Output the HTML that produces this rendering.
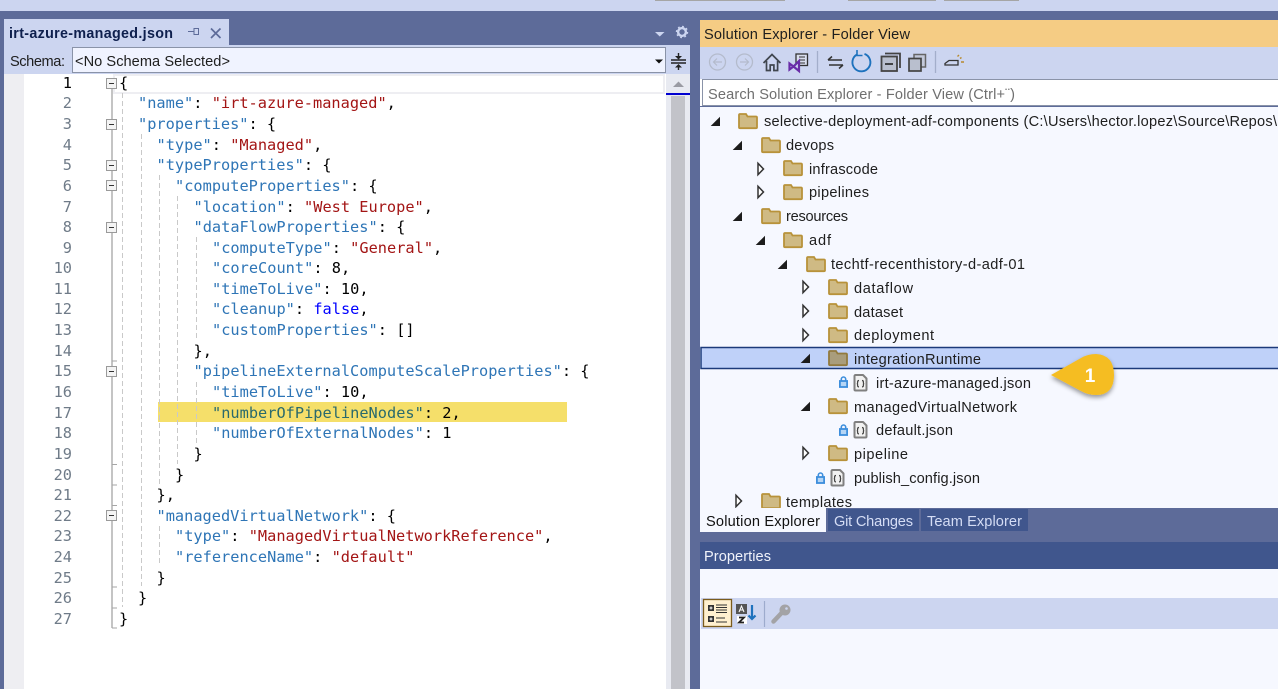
<!DOCTYPE html>
<html><head><meta charset="utf-8"><title>irt-azure-managed.json</title>
<style>
html,body{margin:0;padding:0;background:#5D6B99;overflow:hidden}
svg{display:block}
.u{font-family:"Liberation Sans",sans-serif;font-size:14.6px;fill:#1e1e1e}
.c{font-family:"DejaVu Sans Mono","Liberation Mono",monospace;font-size:15.3px;white-space:pre;fill:#000}
.k{fill:#2E75B6}.s{fill:#A31515}.b{fill:#0000FF}.h{fill:#2a6a6c}
.n{font-family:"DejaVu Sans Mono","Liberation Mono",monospace;font-size:15.3px;fill:#6f7b88;text-anchor:end}
</style></head><body>
<svg xmlns="http://www.w3.org/2000/svg" width="1278" height="689" viewBox="0 0 1278 689">
<defs>
<symbol id="fo" viewBox="0 0 20 16" width="20" height="16" overflow="visible"><path d="M1 2a1 1 0 0 1 1-1h6l1.500 2.500H18a1 1 0 0 1 1 1V14.200a1 1 0 0 1-1 1H2a1 1 0 0 1-1-1Z" fill="#CFBA84" stroke="#B8923A" stroke-width="1.800"/></symbol>
<symbol id="fs" viewBox="0 0 20 16" width="20" height="16" overflow="visible"><path d="M1 2a1 1 0 0 1 1-1h6l1.500 2.500H18a1 1 0 0 1 1 1V14.200a1 1 0 0 1-1 1H2a1 1 0 0 1-1-1Z" fill="#A99D7C" stroke="#927A3E" stroke-width="1.800"/></symbol>
<symbol id="js" viewBox="0 0 15 18" width="15" height="18" overflow="visible"><path d="M1.500 2a1 1 0 0 1 1-1h7.500l3.500 3.500V15.500a1 1 0 0 1-1 1h-10a1 1 0 0 1-1-1Z" fill="#F1F1F1" stroke="#808080" stroke-width="2" stroke-linejoin="round"/><path d="M6 6.500q-1.400 0-1.400 1.400v1q0 .8-.8.8.8 0 .8.8v1q0 1.400 1.400 1.400M9 6.500q1.400 0 1.400 1.400v1q0 .8.8.8-.8 0-.8.8v1q0 1.400-1.400 1.400" fill="none" stroke="#444" stroke-width="1.200"/></symbol>
<symbol id="lk" viewBox="0 0 9 12" width="9" height="12" overflow="visible"><rect x=".9" y="5" width="7.200" height="6" fill="#B5D5F5" stroke="#3D8EDC" stroke-width="1.800"/><path d="M2.300 5V3.200a2.200 2.200 0 0 1 4.400 0V5" fill="none" stroke="#3D8EDC" stroke-width="1.600"/></symbol>
<symbol id="ex" viewBox="0 0 9 9" width="9" height="9" overflow="visible"><path d="M9 -.3V9H-.3Z" fill="#1c1c1c"/></symbol>
<symbol id="co" viewBox="0 0 7 12" width="7" height="12" overflow="visible"><path d="M1 .3 6.500 6 1 11.700Z" fill="#fff" stroke="#333" stroke-width="1.500"/></symbol>
<symbol id="ob" viewBox="0 0 11 11" width="11" height="11" overflow="visible"><rect x=".5" y=".5" width="10" height="10" fill="#F4F4F4" stroke="#9a9a9a"/><path d="M3 5.500H8" stroke="#333"/></symbol>
<filter id="sh" x="-20%" y="-20%" width="140%" height="150%"><feDropShadow dx="0" dy="2.500" stdDeviation="2.500" flood-color="#000" flood-opacity=".4"/></filter>
</defs>

<!-- Backgrounds -->
<rect width="1278" height="689" fill="#5D6B99"/>
<rect width="1278" height="11" fill="#CCD5F0"/>
<rect x="655" width="130" height="1" fill="#a5a5a5"/><rect x="848" width="88" height="1" fill="#a5a5a5"/><rect x="944" width="75" height="1" fill="#a5a5a5"/>

<!-- Document tab -->
<rect x="4" y="19" width="225" height="26" fill="#CCD5F0"/>
<text class="u" x="9" y="38" textLength="164" style="font-weight:bold;fill:#0E1F4D;font-size:14.300px">irt-azure-managed.json</text>
<path d="M188 31.500h6M194 28.500v6h4.500v-6Z" fill="none" stroke="#5D6B99" stroke-width="1"/>
<path d="M211 28.500l9.500 9.500M220.500 28.500l-9.500 9.500" stroke="#5D6B99" stroke-width="1.700"/>
<path d="M655 32h9.500l-4.750 4.500Z" fill="#CCD5F0"/>
<circle cx="682" cy="32" r="3.900" fill="none" stroke="#CCD5F0" stroke-width="2.400"/>
<circle cx="682" cy="32" r="5.500" fill="none" stroke="#CCD5F0" stroke-width="1.400" stroke-dasharray="1.800 2.500"/>

<!-- Schema bar -->
<rect x="4" y="45" width="686" height="29" fill="#CCD5F0"/>
<text class="u" x="10" y="66" textLength="55">Schema:</text>
<rect x="72.500" y="47.500" width="593" height="25" fill="#F0F3FF" stroke="#8A93A8"/>
<text class="u" x="75" y="66" textLength="155">&lt;No Schema Selected&gt;</text>
<path d="M655 59.500h8l-4 4Z" fill="#111"/>
<path d="M671 60h15M671 63h15" stroke="#222" stroke-width="1.400"/>
<path d="M678.500 53v5M678.500 65v5" stroke="#222" stroke-width="1.400"/>
<path d="M675 56h7l-3.500 3.500ZM675 67.500h7L678.500 64Z" fill="#222"/>

<!-- Editor -->
<rect x="4" y="74" width="662" height="615" fill="#fff"/>
<rect x="4" y="74" width="20" height="615" fill="#EEEEF2"/>
<rect x="114" y="75" width="550" height="18" fill="none" stroke="#EEEEF2" stroke-width="2"/>
<!-- Scrollbar -->
<rect x="666" y="74" width="24" height="615" fill="#E8EAF1"/>
<rect x="671" y="96" width="14" height="593" fill="#C2C3C9"/>
<path d="M673 87l5.500-5.500 5.500 5.500Z" fill="#9a9ba3"/>
<rect x="666" y="93" width="24" height="2" fill="#0000D0"/>

<!-- Highlight -->
<rect x="158" y="402" width="409" height="20" fill="#F5DF6A"/>

<!-- Indent guides -->
<g stroke="#C9C9C9" stroke-dasharray="5 3" fill="none">
<path d="M122.500 93V607"/><path d="M141.500 134V586"/><path d="M159.500 175V484M159.500 526V566"/><path d="M177.500 196V464"/><path d="M196.500 237V340M196.500 382V443"/>
</g>

<!-- Outline -->
<path d="M112 89V628" stroke="#B0B0B0" stroke-width="1.500"/>
<path d="M112 361h5M112 464.500h5M112 485h5M112 505.500h5M112 587h5M112 608h5M112 628h5" stroke="#A6A6A6"/>
<use href="#ob" x="106" y="78"/><use href="#ob" x="106" y="119"/><use href="#ob" x="106" y="160"/><use href="#ob" x="106" y="180"/><use href="#ob" x="106" y="222"/><use href="#ob" x="106" y="366"/><use href="#ob" x="106" y="510"/>

<!-- Line numbers -->
<text class="n" x="72" y="88" style="fill:#000">1</text>
<text class="n" x="72" y="108">2</text><text class="n" x="72" y="129">3</text><text class="n" x="72" y="150">4</text><text class="n" x="72" y="170">5</text><text class="n" x="72" y="191">6</text><text class="n" x="72" y="212">7</text><text class="n" x="72" y="232">8</text><text class="n" x="72" y="253">9</text><text class="n" x="72" y="273">10</text><text class="n" x="72" y="294">11</text><text class="n" x="72" y="314">12</text><text class="n" x="72" y="335">13</text><text class="n" x="72" y="356">14</text><text class="n" x="72" y="376">15</text><text class="n" x="72" y="397">16</text><text class="n" x="72" y="418">17</text><text class="n" x="72" y="438">18</text><text class="n" x="72" y="459">19</text><text class="n" x="72" y="480">20</text><text class="n" x="72" y="500">21</text><text class="n" x="72" y="521">22</text><text class="n" x="72" y="541">23</text><text class="n" x="72" y="562">24</text><text class="n" x="72" y="583">25</text><text class="n" x="72" y="603">26</text><text class="n" x="72" y="624">27</text>

<!-- Code -->
<g xml:space="preserve">
<text class="c" x="119" y="88">{</text>
<text class="c" x="138" y="108"><tspan class="k">"name"</tspan>: <tspan class="s">"irt-azure-managed"</tspan>,</text>
<text class="c" x="138" y="129"><tspan class="k">"properties"</tspan>: {</text>
<text class="c" x="156.500" y="150"><tspan class="k">"type"</tspan>: <tspan class="s">"Managed"</tspan>,</text>
<text class="c" x="156.500" y="170"><tspan class="k">"typeProperties"</tspan>: {</text>
<text class="c" x="175" y="191"><tspan class="k">"computeProperties"</tspan>: {</text>
<text class="c" x="193.500" y="212"><tspan class="k">"location"</tspan>: <tspan class="s">"West Europe"</tspan>,</text>
<text class="c" x="193.500" y="232"><tspan class="k">"dataFlowProperties"</tspan>: {</text>
<text class="c" x="212" y="253"><tspan class="k">"computeType"</tspan>: <tspan class="s">"General"</tspan>,</text>
<text class="c" x="212" y="273"><tspan class="k">"coreCount"</tspan>: 8,</text>
<text class="c" x="212" y="294"><tspan class="k">"timeToLive"</tspan>: 10,</text>
<text class="c" x="212" y="314"><tspan class="k">"cleanup"</tspan>: <tspan class="b">false</tspan>,</text>
<text class="c" x="212" y="335"><tspan class="k">"customProperties"</tspan>: []</text>
<text class="c" x="193.500" y="356">},</text>
<text class="c" x="193.500" y="376"><tspan class="k">"pipelineExternalComputeScaleProperties"</tspan>: {</text>
<text class="c" x="212" y="397"><tspan class="k">"timeToLive"</tspan>: 10,</text>
<text class="c" x="212" y="418"><tspan class="h">"numberOfPipelineNodes"</tspan>: 2,</text>
<text class="c" x="212" y="438"><tspan class="k">"numberOfExternalNodes"</tspan>: 1</text>
<text class="c" x="193.500" y="459">}</text>
<text class="c" x="175" y="480">}</text>
<text class="c" x="156.500" y="500">},</text>
<text class="c" x="156.500" y="521"><tspan class="k">"managedVirtualNetwork"</tspan>: {</text>
<text class="c" x="175" y="541"><tspan class="k">"type"</tspan>: <tspan class="s">"ManagedVirtualNetworkReference"</tspan>,</text>
<text class="c" x="175" y="562"><tspan class="k">"referenceName"</tspan>: <tspan class="s">"default"</tspan></text>
<text class="c" x="156.500" y="583">}</text>
<text class="c" x="138" y="603">}</text>
<text class="c" x="119" y="624">}</text>
</g>

<!-- Solution Explorer -->
<rect x="700" y="20" width="578" height="27" fill="#F5CC84"/>
<text class="u" x="704" y="39" textLength="206">Solution Explorer - Folder View</text>
<rect x="700" y="47" width="578" height="32" fill="#CCD5F0"/>

<!-- Toolbar icons -->
<g fill="none">
<circle cx="717.500" cy="62" r="8" stroke="#B4BBCC" stroke-width="1.300"/><path d="M722 62h-8M717 58.500 713.500 62l3.500 3.500" stroke="#B4BBCC" stroke-width="1.200"/>
<circle cx="744.500" cy="62" r="8" stroke="#B4BBCC" stroke-width="1.300"/><path d="M740 62h8M745 58.500 748.500 62 745 65.500" stroke="#B4BBCC" stroke-width="1.200"/>
<path d="M763.500 63 772 54.500 780.500 63M766.500 61v9.500h3.700V65h3.700v5.500h3.700V61" stroke="#40464F" stroke-width="1.700"/>
<rect x="796" y="54" width="11.500" height="11.500" fill="#D9DEEE" stroke="#333" stroke-width="1.300"/><path d="M799 57h6M799 60h6M799 63h6" stroke="#333"/>
<path d="M789.500 63.500 793.500 66.500 799 61v10l-5.500-4.500-4 3Z" fill="#CCD5F0" stroke="#6A2DA8" stroke-width="2.200"/>
<path d="M817.500 51V73" stroke="#A3AECB" stroke-width="1.300"/>
<path d="M828 60h14M828 60l4-3.500M843 65h-14M843 65l-4 3.500" stroke="#333" stroke-width="1.500"/>
<path d="M857 54.500a9 9 0 1 0 7.500-.6" stroke="#1E72BD" stroke-width="1.900"/><path d="M857 50v5.500h5.500" stroke="#1E72BD" stroke-width="1.600"/>
<path d="M885 53.500h15V68" stroke="#444" stroke-width="1.800"/><rect x="881.500" y="56.500" width="15.500" height="14.500" fill="#B9BFCE" stroke="#444" stroke-width="1.800"/><path d="M885 64h8" stroke="#222" stroke-width="1.600"/>
<rect x="914" y="54.500" width="11.500" height="12.500" fill="#C3C9DA" stroke="#666" stroke-width="1.500"/><rect x="909" y="58.500" width="12" height="12.500" fill="#B9BFCE" stroke="#444" stroke-width="1.700"/>
<path d="M935.500 51V73" stroke="#A3AECB" stroke-width="1.300"/>
<path d="M945 63.500 949 60.500H958V65H945Z" fill="#CCD5F0" stroke="#333" stroke-width="1.300"/>
<path d="M957.500 56.500l1.500-1.500M961 62h3M960 58.500l1.500-1" stroke="#B88A2E" stroke-width="1.400"/>
</g>

<!-- Search -->
<rect x="700" y="79" width="578" height="27" fill="#fff"/>
<path d="M702 79.500H1278M702 105.500H1278" stroke="#8A93A8"/><path d="M702.500 79V106" stroke="#8A93A8"/>
<text class="u" x="708" y="99" textLength="307" style="fill:#6f6f6f">Search Solution Explorer - Folder View (Ctrl+¨)</text>

<!-- Tree -->
<rect x="700" y="107" width="578" height="403" fill="#F6F8FF"/>
<rect x="701" y="347.500" width="578" height="21" fill="#BFD1F9" stroke="#1C3A7A" stroke-width="1.500"/>

<use href="#ex" x="711" y="117"/><use href="#fo" x="738" y="113"/>
<text class="u" x="764" y="126" textLength="513">selective-deployment-adf-components (C:\Users\hector.lopez\Source\Repos\</text>
<use href="#ex" x="733" y="141"/><use href="#fo" x="761" y="137"/>
<text class="u" x="786" y="150" textLength="48">devops</text>
<use href="#co" x="757" y="163"/><use href="#fo" x="783" y="160"/>
<text class="u" x="809" y="174" textLength="69">infrascode</text>
<use href="#co" x="757" y="186"/><use href="#fo" x="783" y="184"/>
<text class="u" x="809" y="197" textLength="60">pipelines</text>
<use href="#ex" x="733" y="212"/><use href="#fo" x="761" y="208"/>
<text class="u" x="786" y="221" textLength="62">resources</text>
<use href="#ex" x="756" y="236"/><use href="#fo" x="783" y="232"/>
<text class="u" x="809" y="245" textLength="22">adf</text>
<use href="#ex" x="778" y="260"/><use href="#fo" x="806" y="256"/>
<text class="u" x="831" y="269" textLength="194">techtf-recenthistory-d-adf-01</text>
<use href="#co" x="802" y="281"/><use href="#fo" x="828" y="279"/>
<text class="u" x="854" y="293" textLength="59">dataflow</text>
<use href="#co" x="802" y="305"/><use href="#fo" x="828" y="303"/>
<text class="u" x="854" y="317" textLength="49">dataset</text>
<use href="#co" x="802" y="329"/><use href="#fo" x="828" y="327"/>
<text class="u" x="854" y="340" textLength="80">deployment</text>
<use href="#ex" x="801" y="354"/><use href="#fs" x="828" y="350"/>
<text class="u" x="854" y="364" textLength="127">integrationRuntime</text>
<use href="#lk" x="839" y="376"/><use href="#js" x="853" y="374"/>
<text class="u" x="876" y="388" textLength="155">irt-azure-managed.json</text>
<use href="#ex" x="801" y="402"/><use href="#fo" x="828" y="398"/>
<text class="u" x="854" y="412" textLength="163">managedVirtualNetwork</text>
<use href="#lk" x="839" y="424"/><use href="#js" x="853" y="421"/>
<text class="u" x="876" y="435" textLength="77">default.json</text>
<use href="#co" x="802" y="447"/><use href="#fo" x="828" y="445"/>
<text class="u" x="854" y="459" textLength="54">pipeline</text>
<use href="#lk" x="816" y="472"/><use href="#js" x="830" y="469"/>
<text class="u" x="854" y="483" textLength="126">publish_config.json</text>
<use href="#co" x="735" y="495"/><use href="#fo" x="761" y="493"/>
<text class="u" x="786" y="507" textLength="66">templates</text>

<!-- Callout -->
<path d="M1051 375 1081 358Q1088 354 1096 354 1114 355 1114 375 1114 395 1096 395 1088 395 1081 391Z" fill="#F5BD20" filter="url(#sh)"/>
<text x="1090" y="382" text-anchor="middle" style="font-family:'Liberation Sans',sans-serif;font-size:19px;font-weight:bold;fill:#fff">1</text>

<!-- Tabs -->
<rect x="700" y="508" width="578" height="34" fill="#5D6B99"/>
<rect x="700" y="508" width="126" height="24" fill="#F6F8FF"/>
<text class="u" x="706" y="526" textLength="114" style="fill:#111">Solution Explorer</text>
<rect x="828" y="509" width="91" height="22" fill="#40568D"/>
<text class="u" x="834" y="526" textLength="79" style="fill:#D5DDF5">Git Changes</text>
<rect x="921" y="509" width="107" height="22" fill="#40568D"/>
<text class="u" x="927" y="526" textLength="95" style="fill:#D5DDF5">Team Explorer</text>

<!-- Properties -->
<rect x="700" y="542" width="578" height="27" fill="#40568D"/>
<text class="u" x="704" y="561" textLength="67" style="fill:#F0F2FA">Properties</text>
<rect x="700" y="569" width="578" height="120" fill="#F6F8FF"/>
<rect x="701" y="598" width="577" height="31" fill="#CCD5F0"/>
<rect x="703.500" y="599.500" width="28" height="27" fill="#FFF0CF" stroke="#7A5B1C" stroke-width="1.300"/>
<g fill="none">
<rect x="708" y="605" width="6" height="6" fill="#333"/><rect x="708" y="616" width="6" height="6" fill="#333"/>
<path d="M709.500 608h3M711 606.500v3M709.500 619h3M711 617.500v3" stroke="#fff"/>
<path d="M716 605h11M716 607.500h11M716 610h11M716 612.500h11M716 618h9M716 622h11" stroke="#333" stroke-width="1"/>
<rect x="736" y="604" width="11" height="10" fill="#555"/><path d="M739 612l2.500-6 2.500 6M740 610h3" stroke="#fff" stroke-width="1"/>
<rect x="737" y="616" width="10" height="8" fill="#fff"/><path d="M739 617.500h5l-5 5h5" stroke="#222" stroke-width="1.800"/>
<path d="M752 605v14M748.500 615.500l3.500 3.500 3.500-3.500" stroke="#1E72BD" stroke-width="2.200"/>
<path d="M764.500 601V627" stroke="#9DABCD" stroke-width="1.200"/>
<path d="M773.500 621.500 782.500 612" stroke="#A3A3A6" stroke-width="4.500" stroke-linecap="round"/>
<circle cx="785" cy="610" r="5.500" fill="#A3A3A6"/><circle cx="786.500" cy="608.500" r="1.300" fill="#CCD5F0"/>
</g>
</svg>
</body></html>
